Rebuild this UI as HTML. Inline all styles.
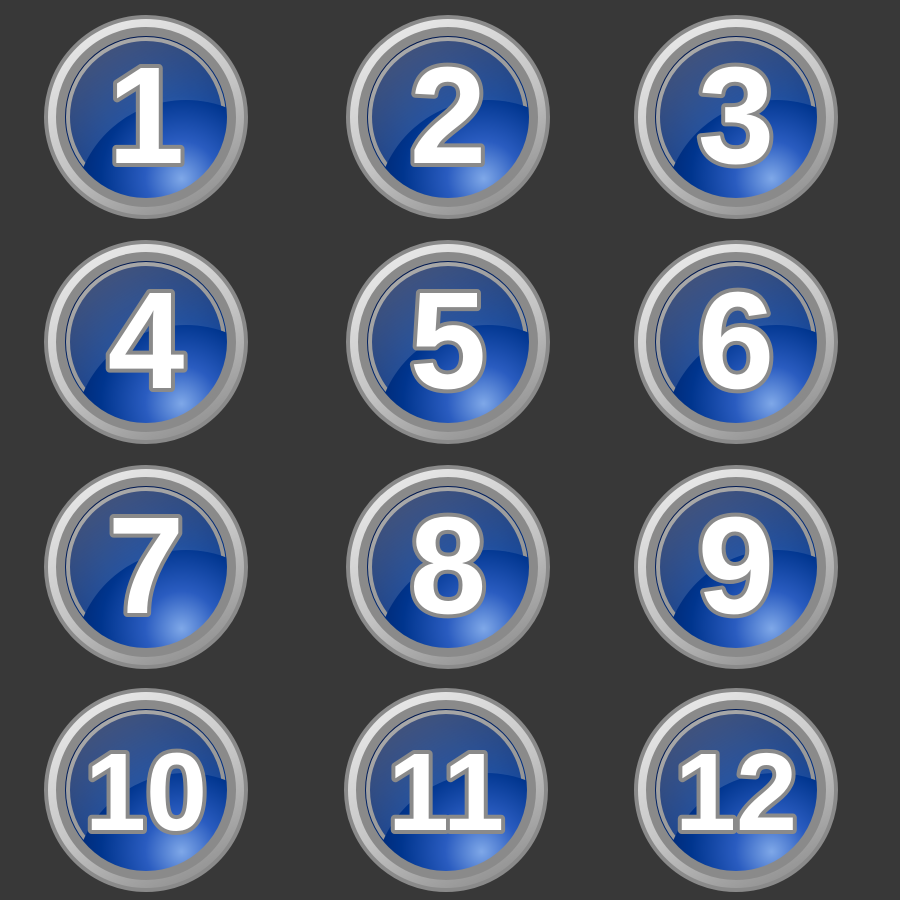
<!DOCTYPE html>
<html><head><style>html,body{margin:0;padding:0;background:#383838;}svg{display:block}</style></head>
<body>
<svg width="900" height="900" viewBox="0 0 900 900" xmlns="http://www.w3.org/2000/svg">
<defs>
<linearGradient id="ring" x1="0.2" y1="0.05" x2="0.7" y2="1">
<stop offset="0" stop-color="#e8e8e8"/><stop offset="0.55" stop-color="#c4c4c4"/><stop offset="1" stop-color="#929292"/>
</linearGradient>
<linearGradient id="ring2" x1="0.3" y1="0" x2="0.7" y2="1">
<stop offset="0" stop-color="#bdbdbd"/><stop offset="1" stop-color="#e2e2e2"/>
</linearGradient>
<radialGradient id="blue" cx="0.72" cy="0.85" r="0.9" fx="0.72" fy="0.88">
<stop offset="0" stop-color="#7fa8e8"/><stop offset="0.25" stop-color="#2a5cc0"/><stop offset="0.55" stop-color="#00358e"/><stop offset="1" stop-color="#001850"/>
</radialGradient>
<linearGradient id="gloss" x1="0" y1="0" x2="0.6" y2="1">
<stop offset="0" stop-color="#ffffff" stop-opacity="0.3"/><stop offset="1" stop-color="#ffffff" stop-opacity="0.03"/>
</linearGradient>
<mask id="gm" maskUnits="userSpaceOnUse" x="-100" y="-100" width="200" height="200">
<circle cx="0" cy="0" r="80" fill="#fff"/>
<circle cx="40" cy="95" r="112" fill="#000"/>
</mask>
<g id="btn">
<circle r="98" fill="url(#ring)"/>
<circle r="86" fill="url(#ring2)"/>
<circle r="83.5" fill="#0a1a40"/>
<circle r="81" fill="url(#blue)"/>
<circle r="80" fill="url(#gloss)" mask="url(#gm)"/>
</g>
</defs>
<g font-family="Liberation Sans, sans-serif" font-weight="bold" fill="#fff" stroke="#8a8a8a" stroke-width="8" paint-order="stroke" text-anchor="middle" stroke-linejoin="round">
<g transform="translate(146,117)"><use href="#btn"/><text y="46" font-size="138">1</text></g>
<g transform="translate(448,117)"><use href="#btn"/><text y="46" font-size="138">2</text></g>
<g transform="translate(736,117)"><use href="#btn"/><text y="46" font-size="138">3</text></g>
<g transform="translate(146,342)"><use href="#btn"/><text y="46" font-size="138">4</text></g>
<g transform="translate(448,342)"><use href="#btn"/><text y="46" font-size="138">5</text></g>
<g transform="translate(736,342)"><use href="#btn"/><text y="46" font-size="138">6</text></g>
<g transform="translate(146,567)"><use href="#btn"/><text y="46" font-size="138">7</text></g>
<g transform="translate(448,567)"><use href="#btn"/><text y="46" font-size="138">8</text></g>
<g transform="translate(736,567)"><use href="#btn"/><text y="46" font-size="138">9</text></g>
<g transform="translate(146,790)"><use href="#btn"/><text y="40" font-size="110">10</text></g>
<g transform="translate(446,790)"><use href="#btn"/><text y="40" font-size="110">11</text></g>
<g transform="translate(736,790)"><use href="#btn"/><text y="40" font-size="110">12</text></g>
</g>
</svg>
</body></html>
